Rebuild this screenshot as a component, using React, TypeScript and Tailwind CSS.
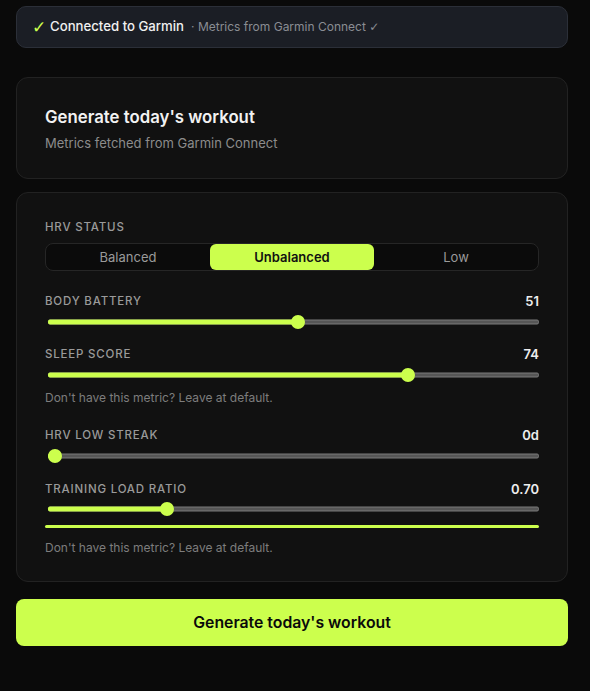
import React from "react";

const LIME = "#ccff4d";

function Slider({ pct }: { pct: number }) {
  return (
    <div className="relative h-[14px] w-full">
      <div className="absolute left-0 right-0 top-1/2 h-[5px] -translate-y-1/2 rounded-[2px] border border-[#7a7a7a] bg-[#565656]" />
      <div
        className="absolute left-0 top-1/2 h-[5px] -translate-y-1/2 rounded-[2px] bg-[#ccff4d]"
        style={{ width: `calc(7px + ${pct} * (100% - 14px))` }}
      />
      <div
        className="absolute top-0 h-[14px] w-[14px] rounded-full bg-[#ccff4d]"
        style={{ left: `calc(${pct} * (100% - 14px))` }}
      />
    </div>
  );
}

function Row({ label, value }: { label: string; value: string }) {
  return (
    <div className="flex h-[18px] items-center justify-between">
      <span className="text-[11.5px] font-medium uppercase tracking-[0.07em] text-[#9a9a9a]">{label}</span>
      <span className="text-[13px] font-semibold text-[#ededed]">{value}</span>
    </div>
  );
}

export default function App() {
  return (
    <div
      className="min-h-[691px] bg-[#0a0a0a] pl-4 pr-[22px] pt-[6px] pb-10"
      style={{ fontFamily: "Inter, 'Noto Sans', sans-serif" }}
    >
      <div className="flex h-[42px] items-center rounded-[10px] border border-[#2b2f38] bg-[#1b1e25] pl-[15px] pr-[14px]">
        <span
          className="w-[13px] text-[17px] leading-none text-[#ccff4d]"
          style={{ fontFamily: "'DejaVu Sans', sans-serif" }}
        >
          ✓
        </span>
        <span className="ml-[5px] text-[13.2px] font-medium text-[#f0f0f0]">Connected to Garmin</span>
        <span className="ml-[7px] text-[12px] text-[#8a8d93]">
          · Metrics from Garmin Connect <span style={{ fontFamily: "'DejaVu Sans', sans-serif" }}>✓</span>
        </span>
      </div>

      <div className="mt-[29px] rounded-xl border border-[#222222] bg-[#111111] px-7 pt-[27px] pb-[25px]">
        <div className="text-[16.8px] font-semibold leading-6 text-[#f2f2f2]">Generate today's workout</div>
        <div className="mt-1 text-[13px] leading-5 text-[#8c8c8c]">Metrics fetched from Garmin Connect</div>
      </div>

      <div className="mt-[13px] rounded-xl border border-[#222222] bg-[#111111] px-7 pt-[27px] pb-[25px]">
        <div className="text-[11.5px] font-medium uppercase leading-[14px] tracking-[0.07em] text-[#9a9a9a]">HRV Status</div>
        <div className="mt-[9px] grid h-[28px] grid-cols-3 rounded-lg border border-[#262626] bg-[#0b0b0b]">
          <div className="flex items-center justify-center rounded-md pt-[1px] text-[13px] text-[#9a9a9a]">Balanced</div>
          <div className="flex items-center justify-center rounded-md bg-[#ccff4d] pt-[1px] text-[13px] font-semibold text-[#111111]">Unbalanced</div>
          <div className="flex items-center justify-center rounded-md pt-[1px] text-[13px] text-[#9a9a9a]">Low</div>
        </div>

        <div className="mt-[22px]">
          <Row label="Body Battery" value="51" />
        </div>
        <div className="mt-[4px] pl-[3px]">
          <Slider pct={0.51} />
        </div>

        <div className="mt-[17px]">
          <Row label="Sleep Score" value="74" />
        </div>
        <div className="mt-[4px] pl-[3px]">
          <Slider pct={0.74} />
        </div>
        <div className="mt-[8px] text-[12px] leading-4 text-[#7d7d7d]">Don't have this metric? Leave at default.</div>

        <div className="mt-[21px]">
          <Row label="HRV Low Streak" value="0d" />
        </div>
        <div className="mt-[4px] pl-[3px]">
          <Slider pct={0} />
        </div>

        <div className="mt-[18px]">
          <Row label="Training Load Ratio" value="0.70" />
        </div>
        <div className="mt-[3px] pl-[3px]">
          <Slider pct={0.235} />
        </div>
        <div className="mt-[9px] h-[3px] rounded-full" style={{ backgroundColor: LIME }} />
        <div className="mt-3 text-[12px] leading-4 text-[#7d7d7d]">Don't have this metric? Leave at default.</div>
      </div>

      <button className="mt-[17px] flex h-[47px] w-full items-center justify-center rounded-lg bg-[#ccff4d] text-[15.8px] font-semibold text-[#0a0a0a]">
        Generate today's workout
      </button>
    </div>
  );
}
